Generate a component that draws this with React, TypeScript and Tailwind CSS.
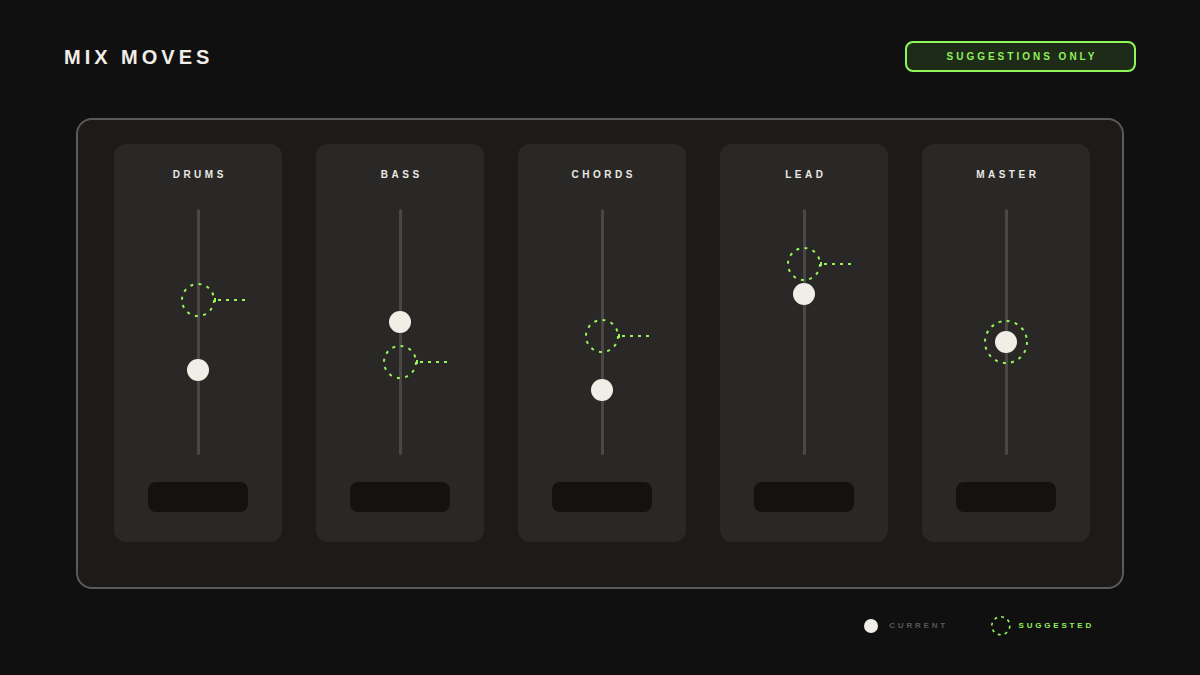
import React from 'react';

type Channel = {
  name: string;
  current: number; // px from top of the fader track
  suggested: number;
};

const channels: Channel[] = [
  { name: 'DRUMS', current: 161, suggested: 91 },
  { name: 'BASS', current: 113, suggested: 153 },
  { name: 'CHORDS', current: 181, suggested: 127 },
  { name: 'LEAD', current: 85, suggested: 55 },
  { name: 'MASTER', current: 133, suggested: 133 },
];

const GREEN = '#95f55a';

// dashed ring, dash pattern split evenly round the circumference
function DashRing({ r, count, stroke = 2 }: { r: number; count: number; stroke?: number }) {
  const c = 2 * Math.PI * r;
  const period = c / count;
  const size = r * 2 + stroke + 2;
  const mid = size / 2;
  return (
    <svg width={size} height={size} viewBox={`0 0 ${size} ${size}`} className="block">
      <circle cx={mid} cy={mid} r={r} fill="none" stroke={GREEN} strokeWidth={stroke} strokeDasharray={`3 ${period - 3}`} />
    </svg>
  );
}

function Fader({ ch }: { ch: Channel }) {
  const same = ch.current === ch.suggested;
  return (
    <div className="relative mt-[27px] h-[246px] w-full">
      <div className="mx-auto h-full w-[3px] rounded-full bg-[#4a4744]" />

      {same ? (
        <div className="absolute left-1/2 -translate-x-1/2 -translate-y-1/2" style={{ top: ch.suggested }}>
          <DashRing r={21} count={16} />
        </div>
      ) : (
        <svg
          width={70}
          height={36}
          viewBox="0 0 70 36"
          className="absolute -translate-y-1/2"
          style={{ top: ch.suggested, left: 'calc(50% - 18px)' }}
        >
          <circle cx={18} cy={18} r={16} fill="none" stroke={GREEN} strokeWidth={2} strokeDasharray={`3 ${(2 * Math.PI * 16) / 12 - 3}`} />
          <line x1={35} y1={16} x2={35} y2={20} stroke={GREEN} strokeWidth={2} />
          <line x1={38} y1={18} x2={65} y2={18} stroke={GREEN} strokeWidth={2} strokeDasharray="3 5" />
        </svg>
      )}

      <div
        className="absolute left-1/2 h-[22px] w-[22px] -translate-x-1/2 -translate-y-1/2 rounded-full bg-[#f1eee8]"
        style={{ top: ch.current }}
      />
    </div>
  );
}

function ChannelStrip({ ch }: { ch: Channel }) {
  return (
    <div className="flex w-[168px] flex-col items-center rounded-[12px] bg-[#2a2826] pt-[24px] pb-[30px]">
      <div className="h-[14px] pl-[0.35em] text-[10px] font-bold leading-[14px] tracking-[0.35em] text-[#ebe8e2]">
        {ch.name}
      </div>
      <Fader ch={ch} />
      <div className="mt-[27px] h-[30px] w-[100px] rounded-[8px] bg-[#141211]" />
    </div>
  );
}

export default function App() {
  return (
    <div className="h-[675px] w-[1200px] overflow-hidden bg-[#111010] font-['Liberation_Sans',Arial,sans-serif]">
      <header className="flex items-center justify-between px-16 pt-[41px]">
        <h1 className="text-[20px] font-bold tracking-[0.2em] text-[#f1eee8]">MIX MOVES</h1>
        <div className="flex h-[31px] w-[231px] items-center justify-center rounded-[8px] border-2 border-[#8ef85a] bg-[#1f2b19] pl-[0.3em] text-[10px] font-bold tracking-[0.3em] text-[#8ef05a]">
          SUGGESTIONS ONLY
        </div>
      </header>

      <main className="mx-[76px] mt-[46px] flex h-[471px] justify-between rounded-[16px] border-2 border-[#5c5a58] bg-[#1c1b1a] pt-[24px] pl-[36px] pr-[32px]">
        {channels.map((ch) => (
          <div key={ch.name}>
            <ChannelStrip ch={ch} />
          </div>
        ))}
      </main>

      <div className="mx-[76px] mt-[26px] flex items-center justify-end pr-[30px]">
        <div className="h-[14px] w-[14px] rounded-full bg-[#f1eee8]" />
        <span className="ml-[11px] text-[8px] font-bold tracking-[0.35em] text-[#595754]">CURRENT</span>
        <div className="ml-[42px]">
          <DashRing r={9} count={8} stroke={1.6} />
        </div>
        <span className="ml-[7px] text-[8px] font-bold tracking-[0.35em] text-[#8ef05a]">SUGGESTED</span>
      </div>
    </div>
  );
}
